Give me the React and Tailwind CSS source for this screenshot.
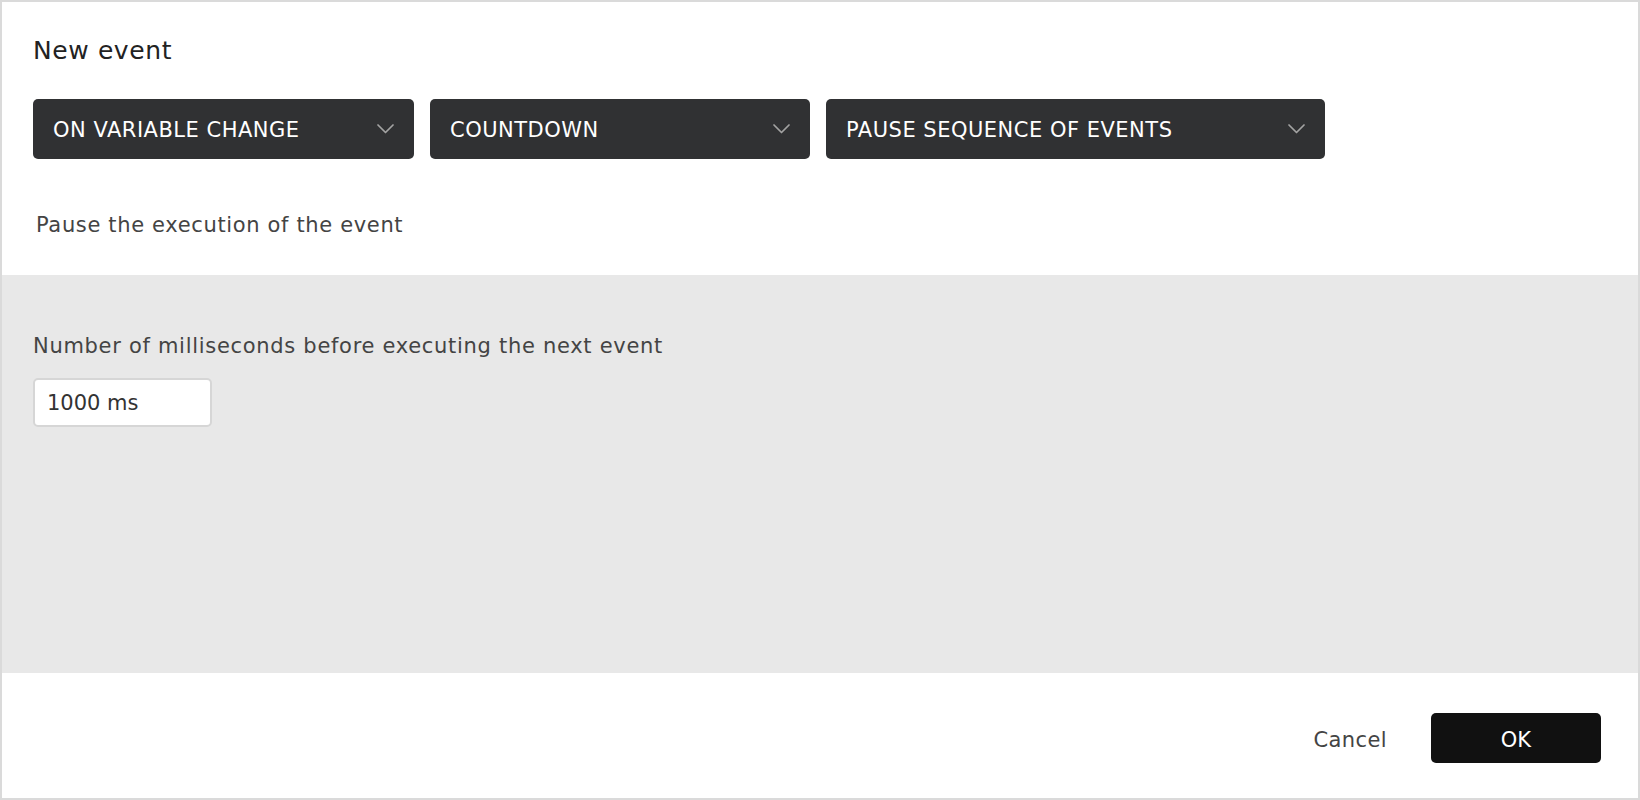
import { useState } from "react";

const Chevron = () => (
  <svg width="17" height="10" viewBox="0 0 17 10" fill="none">
    <polyline
      points="1,1 8.5,8.5 16,1"
      stroke="#a3a3a3"
      strokeWidth="1.7"
      strokeLinecap="round"
      strokeLinejoin="round"
    />
  </svg>
);

const Dropdown = ({ label, width }) => (
  <button
    className={`flex h-[60px] items-center justify-between rounded-[5px] bg-[#303133] pl-5 pr-5 text-left text-[21px] tracking-[0.5px] text-white ${width}`}
  >
    <span className="pt-[4px]">{label}</span>
    <Chevron />
  </button>
);

const App = () => {
  const [ms, setMs] = useState("1000 ms");

  return (
    <div
      className="flex h-[800px] w-[1640px] flex-col border-2 border-[#dadada] bg-white text-[#444]"
      style={{ fontFamily: '"DejaVu Sans", sans-serif' }}
    >
      <div className="h-[273px] px-[31px]">
        <h1 className="pt-[33px] text-[25px] leading-[32px] tracking-[0.6px] text-[#222]">
          New event
        </h1>

        <div className="mt-[32px] flex gap-4">
          <Dropdown label="ON VARIABLE CHANGE" width="w-[381px]" />
          <Dropdown label="COUNTDOWN" width="w-[380px]" />
          <Dropdown label="PAUSE SEQUENCE OF EVENTS" width="w-[499px]" />
        </div>

        <p className="mt-[52px] pl-[3px] text-[21px] leading-[28px] tracking-[0.65px]">
          Pause the execution of the event
        </p>
      </div>

      <div className="h-[398px] bg-[#e8e8e8] px-[31px] pt-[57px]">
        <label className="block text-[21px] leading-[28px] tracking-[0.7px]">
          Number of milliseconds before executing the next event
        </label>
        <input
          className="mt-[18px] h-[49px] w-[179px] rounded-[5px] border-2 border-[#d6d6d6] bg-white px-3 text-[21px] text-[#333] outline-none"
          value={ms}
          onChange={(e) => setMs(e.target.value)}
        />
      </div>

      <div className="flex flex-1 items-start justify-end gap-[44px] pr-[37px] pt-[40px]">
        <button className="h-[50px] pt-[5px] text-[21px] tracking-[0.4px] text-[#444]">
          Cancel
        </button>
        <button className="h-[50px] w-[170px] rounded-[5px] bg-[#111] pt-[5px] text-[21px] text-white">
          OK
        </button>
      </div>
    </div>
  );
};

export default App;
